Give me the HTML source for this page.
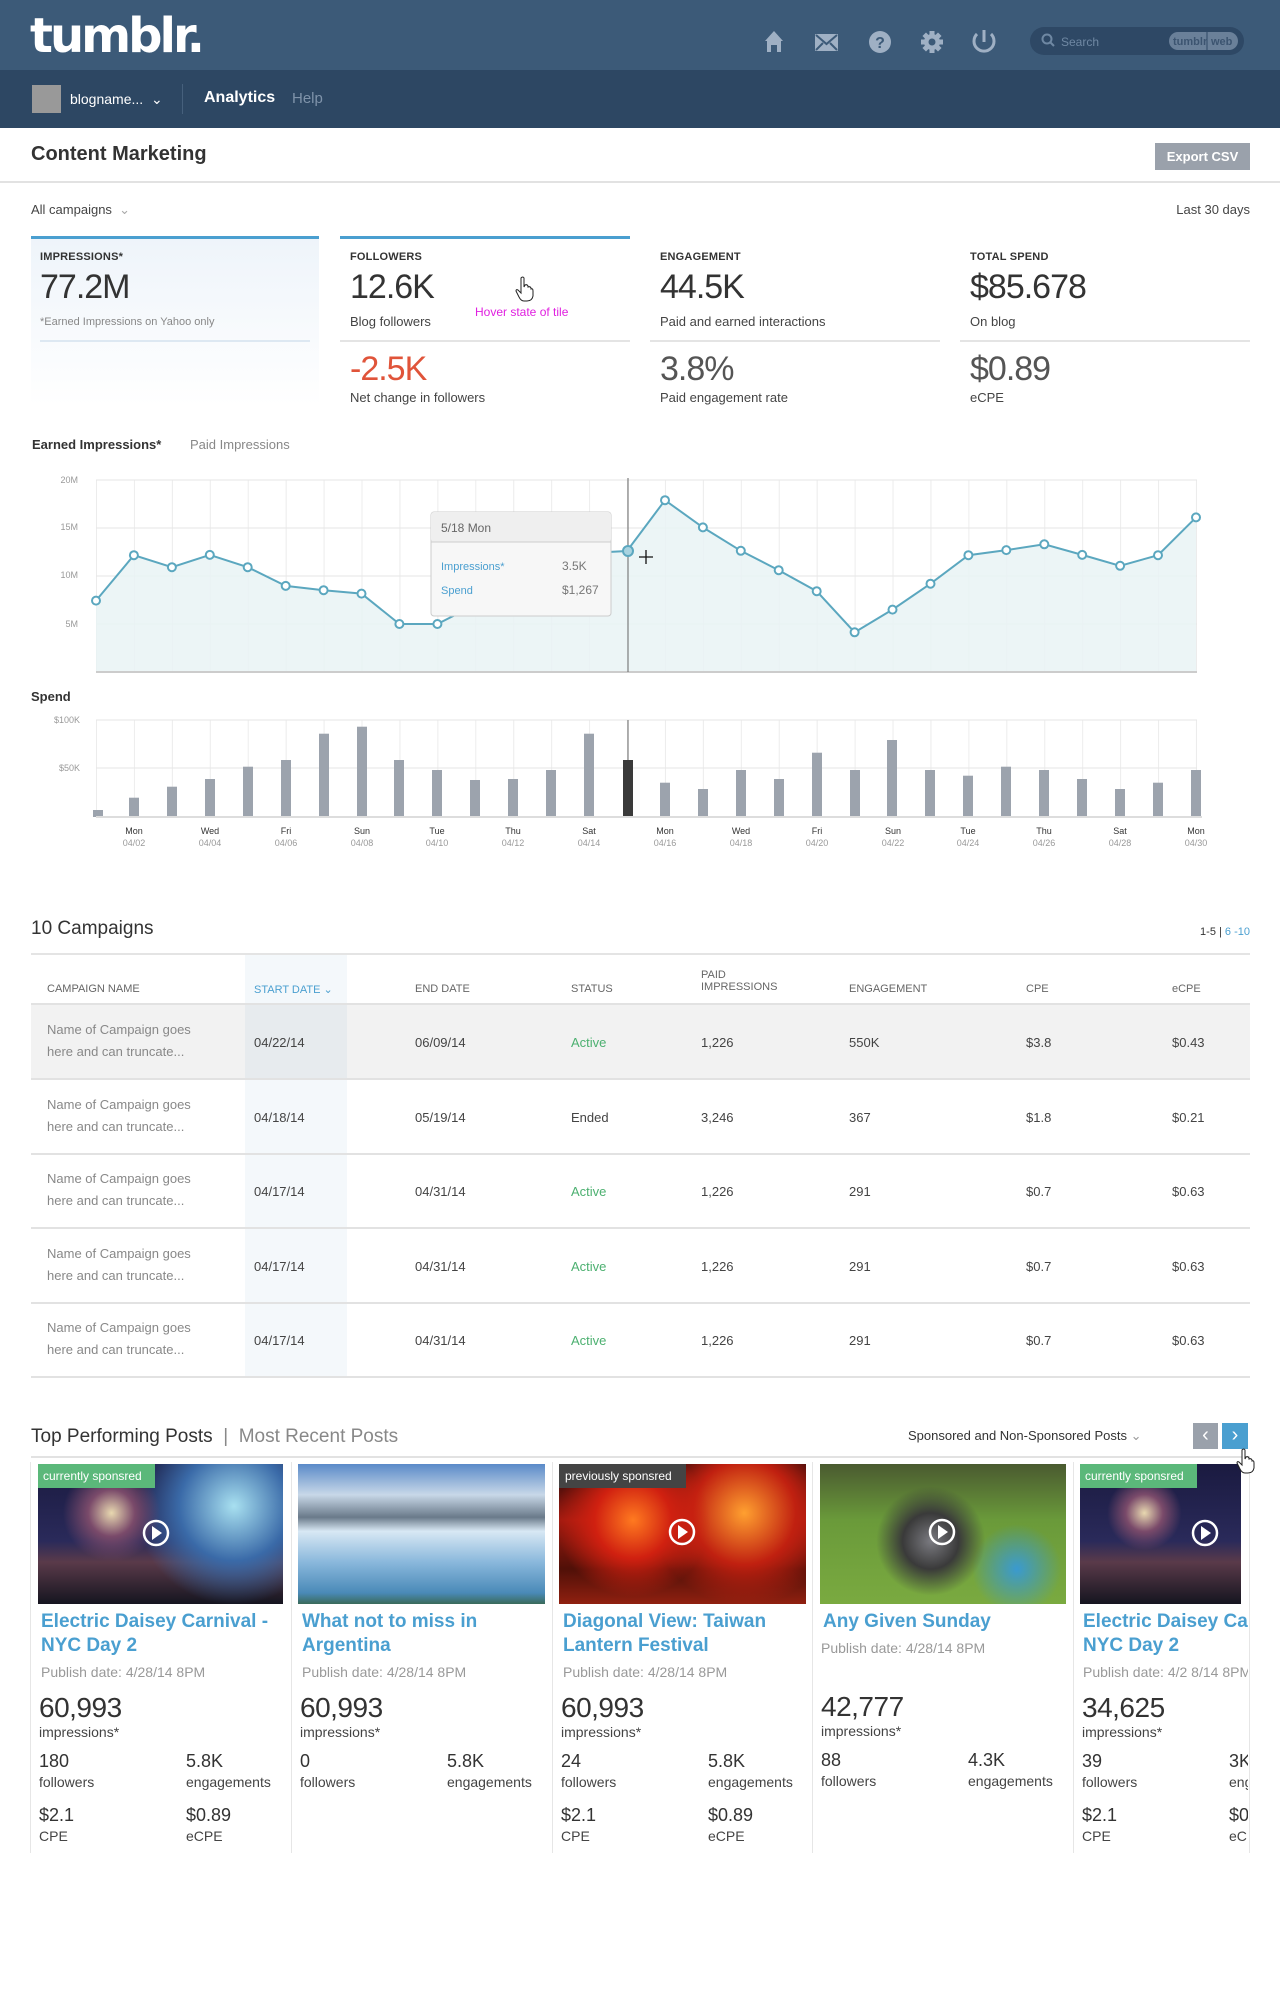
<!DOCTYPE html>
<html><head><meta charset="utf-8">
<style>
*{margin:0;padding:0;box-sizing:border-box}
body{width:1280px;height:2000px;position:relative;background:#fff;font-family:"Liberation Sans",Arial,sans-serif;color:#444;overflow:hidden}
.a{position:absolute;white-space:nowrap}
.lbl{font-size:11px;font-weight:bold;color:#333;letter-spacing:.2px}
.big{font-size:34px;color:#333;letter-spacing:-1px}
.sub{font-size:13px;color:#444}
.th{font-size:11px;color:#666}
.td{font-size:13px;color:#444}
.nm{font-size:13px;color:#888;line-height:22px;white-space:normal;width:170px}
.ttl{font-size:19px;font-weight:bold;color:#4a9fd0;line-height:24px;white-space:normal}
.pd{font-size:14px;color:#999}
.n28{font-size:28px;color:#333;letter-spacing:-.5px}
.n18{font-size:18px;color:#333}
.s14{font-size:14px;color:#444}
</style></head><body>

<!-- header -->
<div class="a" style="left:0;top:0;width:1280px;height:70px;background:#3c5a78"></div>
<div class="a" style="left:0;top:70px;width:1280px;height:58px;background:#2d4763"></div>
<div class="a" style="left:30px;top:8px;font-family:'DejaVu Sans','Liberation Sans',sans-serif;font-weight:bold;font-size:48px;color:#fff;letter-spacing:-3px">tumblr.</div>
<svg class="a" style="left:755px;top:22px" width="520" height="40" viewBox="0 0 520 40">
 <g fill="#9fb0c4">
  <path d="M10 19 L19 9 L28 19 L26 19 L26 30 L22 30 L22 23 L16 23 L16 30 L12 30 L12 19Z"/>
  <rect x="60" y="12" width="23" height="17" rx="1"/>
  <circle cx="125" cy="20" r="11"/>
  <circle cx="177" cy="20" r="8"/>
  <g transform="translate(177 20)"><rect x="-2.5" y="-11" width="5" height="22"/><rect x="-11" y="-2.5" width="22" height="5"/><rect x="-2.5" y="-11" width="5" height="22" transform="rotate(45)"/><rect x="-2.5" y="-11" width="5" height="22" transform="rotate(-45)"/></g>
 </g>
 <path d="M61 13 L71.5 22 L82 13 M61 28 L68 21 M82 28 L75 21" stroke="#3c5a78" stroke-width="2" fill="none"/>
 <text x="125" y="26" font-size="16" font-weight="bold" fill="#3c5a78" text-anchor="middle" font-family="Liberation Sans">?</text>
 <circle cx="177" cy="20" r="3.5" fill="#3c5a78"/>
 <path d="M222 12 A10 10 0 1 0 236 12" stroke="#9fb0c4" stroke-width="3" fill="none"/>
 <line x1="229" y1="8" x2="229" y2="20" stroke="#9fb0c4" stroke-width="3"/>
 <rect x="275" y="5" width="214" height="28" rx="14" fill="#2e4865"/>
 <circle cx="292" cy="17" r="4.5" stroke="#6f88a3" stroke-width="2" fill="none"/><line x1="295" y1="20" x2="299" y2="24" stroke="#6f88a3" stroke-width="2"/>
 <text x="306" y="24" font-size="12" fill="#6f88a3" font-family="Liberation Sans">Search</text>
 <rect x="414" y="10" width="69" height="18" rx="9" fill="#6a8099"/>
 <line x1="452" y1="10" x2="452" y2="28" stroke="#2e4865"/>
 <text x="418" y="23" font-size="11" font-weight="bold" fill="#3c5470" font-family="Liberation Sans">tumblr</text>
 <text x="456" y="23" font-size="11" font-weight="bold" fill="#3c5470" font-family="Liberation Sans">web</text>
</svg>
<div class="a" style="left:32px;top:85px;width:29px;height:28px;background:#999"></div>
<div class="a" style="left:70px;top:91px;font-size:14px;color:#fff">blogname... &nbsp;⌄</div>
<div class="a" style="left:182px;top:84px;width:1px;height:30px;background:#46607c"></div>
<div class="a" style="left:204px;top:89px;font-size:16px;color:#fff;font-weight:bold">Analytics</div>
<div class="a" style="left:292px;top:90px;font-size:15px;color:#7f93aa">Help</div>

<!-- title -->
<div class="a" style="left:31px;top:143px;font-size:20px;font-weight:bold;color:#333">Content Marketing</div>
<div class="a" style="left:1155px;top:143px;width:95px;height:27px;background:#9aa1ab;color:#fff;font-size:13px;font-weight:bold;text-align:center;line-height:27px">Export CSV</div>
<div class="a" style="left:0;top:181px;width:1280px;height:2px;background:#e2e2e2"></div>
<div class="a" style="left:31px;top:202px;font-size:13px;color:#444">All campaigns &nbsp;<span style="color:#aaa">⌄</span></div>
<div class="a" style="left:1150px;top:202px;width:100px;text-align:right;font-size:13px;color:#444">Last 30 days</div>

<!-- tiles -->
<div class="a" style="left:31px;top:236px;width:288px;height:170px;background:linear-gradient(#eef4fa,#fff)"></div>
<div class="a" style="left:31px;top:236px;width:288px;height:3px;background:#4a9fd0"></div>
<div class="a" style="left:340px;top:236px;width:290px;height:3px;background:#4a9fd0"></div>
<div class="a lbl" style="left:40px;top:251px">IMPRESSIONS*</div>
<div class="a big" style="left:40px;top:268px">77.2M</div>
<div class="a" style="left:40px;top:316px;font-size:11px;color:#888">*Earned Impressions on Yahoo only</div>
<div class="a" style="left:40px;top:340px;width:270px;height:2px;background:#dde8f2"></div>

<div class="a lbl" style="left:350px;top:251px">FOLLOWERS</div>
<div class="a big" style="left:350px;top:268px">12.6K</div>
<div class="a sub" style="left:350px;top:314px">Blog followers</div>
<div class="a" style="left:475px;top:305px;font-size:12px;color:#e020e0">Hover state of tile</div>
<svg class="a" style="left:515px;top:276px" width="20" height="26" viewBox="0 0 20 26"><path d="M6 2 Q8 0 9 2 L9 11 L10 9 Q12 8 13 10 L13 11 Q15 10 16 12 L16 13 Q18 12 18 15 L18 20 Q17 25 12 25 L9 25 Q6 25 4 21 L1 15 Q1 13 3 14 L6 17 Z" fill="#fff" stroke="#222" stroke-width="1"/></svg>
<div class="a" style="left:340px;top:340px;width:290px;height:2px;background:#e4e4e4"></div>
<div class="a big" style="left:350px;top:350px;color:#e0543a">-2.5K</div>
<div class="a sub" style="left:350px;top:390px">Net change in followers</div>

<div class="a lbl" style="left:660px;top:251px">ENGAGEMENT</div>
<div class="a big" style="left:660px;top:268px">44.5K</div>
<div class="a sub" style="left:660px;top:314px">Paid and earned interactions</div>
<div class="a" style="left:650px;top:340px;width:290px;height:2px;background:#e4e4e4"></div>
<div class="a big" style="left:660px;top:350px;color:#555">3.8%</div>
<div class="a sub" style="left:660px;top:390px">Paid engagement rate</div>

<div class="a lbl" style="left:970px;top:251px">TOTAL SPEND</div>
<div class="a big" style="left:970px;top:268px">$85.678</div>
<div class="a sub" style="left:970px;top:314px">On blog</div>
<div class="a" style="left:960px;top:340px;width:290px;height:2px;background:#e4e4e4"></div>
<div class="a big" style="left:970px;top:350px;color:#555">$0.89</div>
<div class="a sub" style="left:970px;top:390px">eCPE</div>

<!-- charts -->
<div class="a" style="left:32px;top:437px;font-size:13px;font-weight:bold;color:#333">Earned Impressions*</div>
<div class="a" style="left:190px;top:437px;font-size:13px;color:#888">Paid Impressions</div>
<div class="a" style="left:31px;top:689px;font-size:13px;font-weight:bold;color:#333">Spend</div>
<svg class="a" style="left:0;top:0" width="1280" height="880" font-family="Liberation Sans">
 <defs>
  <pattern id="vg" x="96" y="0" width="37.93" height="880" patternUnits="userSpaceOnUse"><line x1="0.5" y1="0" x2="0.5" y2="880" stroke="#ececec"/></pattern>
 </defs>
 <rect x="96" y="480" width="1101" height="192" fill="url(#vg)"/>
 <g stroke="#e6e6e6"><line x1="96" y1="480" x2="1197" y2="480"/><line x1="96" y1="528" x2="1197" y2="528"/><line x1="96" y1="576" x2="1197" y2="576"/><line x1="96" y1="624" x2="1197" y2="624"/></g>
 <g font-size="9" fill="#999" text-anchor="end"><text x="78" y="483">20M</text><text x="78" y="530">15M</text><text x="78" y="578">10M</text><text x="78" y="627">5M</text></g>
 <polygon fill="#e9f3f5" fill-opacity=".85" points="96,672 96,600.6 133.9,555.2 171.9,567.2 209.8,554.9 247.7,567.2 285.7,585.9 323.6,590.2 361.5,593.6 399.4,624 437.4,624 475.3,604.8 513.2,580.8 551.2,561.6 589.1,553 627,551 665,500.2 702.9,527.4 740.8,550.8 778.7,570.2 816.7,591.2 854.6,632.3 892.5,609.6 930.5,583.7 968.4,555.2 1006.3,550.1 1044.3,544.3 1082.2,554.9 1120.1,565.8 1158,555.2 1196,517.4 1196,672"/>
 <line x1="96" y1="672" x2="1197" y2="672" stroke="#ccc" stroke-width="2"/>
 <line x1="628" y1="478" x2="628" y2="672" stroke="#666"/>
 <polyline fill="none" stroke="#5ba7bf" stroke-width="2" points="96,600.6 133.9,555.2 171.9,567.2 209.8,554.9 247.7,567.2 285.7,585.9 323.6,590.2 361.5,593.6 399.4,624 437.4,624 475.3,604.8 513.2,580.8 551.2,561.6 589.1,553 627,551 665,500.2 702.9,527.4 740.8,550.8 778.7,570.2 816.7,591.2 854.6,632.3 892.5,609.6 930.5,583.7 968.4,555.2 1006.3,550.1 1044.3,544.3 1082.2,554.9 1120.1,565.8 1158,555.2 1196,517.4"/>
 <g fill="#fff" stroke="#5ba7bf" stroke-width="2">
  <circle cx="96" cy="600.6" r="4"/><circle cx="133.9" cy="555.2" r="4"/><circle cx="171.9" cy="567.2" r="4"/><circle cx="209.8" cy="554.9" r="4"/><circle cx="247.7" cy="567.2" r="4"/><circle cx="285.7" cy="585.9" r="4"/><circle cx="323.6" cy="590.2" r="4"/><circle cx="361.5" cy="593.6" r="4"/><circle cx="399.4" cy="624" r="4"/><circle cx="437.4" cy="624" r="4"/><circle cx="665" cy="500.2" r="4"/><circle cx="702.9" cy="527.4" r="4"/><circle cx="740.8" cy="550.8" r="4"/><circle cx="778.7" cy="570.2" r="4"/><circle cx="816.7" cy="591.2" r="4"/><circle cx="854.6" cy="632.3" r="4"/><circle cx="892.5" cy="609.6" r="4"/><circle cx="930.5" cy="583.7" r="4"/><circle cx="968.4" cy="555.2" r="4"/><circle cx="1006.3" cy="550.1" r="4"/><circle cx="1044.3" cy="544.3" r="4"/><circle cx="1082.2" cy="554.9" r="4"/><circle cx="1120.1" cy="565.8" r="4"/><circle cx="1158" cy="555.2" r="4"/><circle cx="1196" cy="517.4" r="4"/>
  <circle cx="628" cy="551" r="5" fill="#a8d3e0"/>
 </g>
 <path d="M646 550v14M639 557h14" stroke="#111" stroke-width="1.3"/>
 <rect x="431" y="512" width="180" height="104" rx="3" fill="#f7f7f7" stroke="#ccc"/>
 <rect x="431" y="512" width="180" height="30" rx="3" fill="#efefef"/>
 <line x1="431" y1="542" x2="611" y2="542" stroke="#ccc"/>
 <text x="441" y="532" font-size="12" fill="#666">5/18 Mon</text>
 <text x="441" y="570" font-size="11" fill="#4a9fd0">Impressions*</text><text x="562" y="570" font-size="12" fill="#777">3.5K</text>
 <text x="441" y="594" font-size="11" fill="#4a9fd0">Spend</text><text x="562" y="594" font-size="12" fill="#777">$1,267</text>
 <rect x="96" y="720" width="1101" height="97" fill="url(#vg)"/>
 <g stroke="#e6e6e6"><line x1="96" y1="720" x2="1197" y2="720"/><line x1="96" y1="768" x2="1197" y2="768"/></g>
 <g font-size="9" fill="#999" text-anchor="end"><text x="80" y="723">$100K</text><text x="80" y="771">$50K</text></g>
 <line x1="628" y1="720" x2="628" y2="817" stroke="#666"/>
 <g fill="#9ca3ad">
  <rect x="93" y="810" width="10" height="7"/><rect x="129" y="797.7" width="10" height="19.3"/><rect x="167" y="786.7" width="10" height="30.3"/><rect x="205" y="779" width="10" height="38"/><rect x="243" y="766.7" width="10" height="50.3"/><rect x="281" y="760" width="10" height="57"/><rect x="319" y="733.7" width="10" height="83.3"/><rect x="357" y="726.7" width="10" height="90.3"/><rect x="394" y="760" width="10" height="57"/><rect x="432" y="770" width="10" height="47"/><rect x="470" y="780" width="10" height="37"/><rect x="508" y="779" width="10" height="38"/><rect x="546" y="770" width="10" height="47"/><rect x="584" y="733.7" width="10" height="83.3"/><rect x="660" y="782.7" width="10" height="34.3"/><rect x="698" y="789" width="10" height="28"/><rect x="736" y="770" width="10" height="47"/><rect x="774" y="779" width="10" height="38"/><rect x="812" y="752.7" width="10" height="64.3"/><rect x="850" y="770" width="10" height="47"/><rect x="887" y="740" width="10" height="77"/><rect x="925" y="770" width="10" height="47"/><rect x="963" y="775.7" width="10" height="41.3"/><rect x="1001" y="766.7" width="10" height="50.3"/><rect x="1039" y="770" width="10" height="47"/><rect x="1077" y="779" width="10" height="38"/><rect x="1115" y="789" width="10" height="28"/><rect x="1153" y="782.7" width="10" height="34.3"/><rect x="1191" y="770" width="10" height="47"/>
 </g>
 <rect x="623" y="760" width="10" height="57" fill="#3a3a3a"/>
 <line x1="96" y1="817" x2="1202" y2="817" stroke="#ddd" stroke-width="2"/>
 <g font-size="9" text-anchor="middle" fill="#333">
  <text x="134" y="834">Mon</text><text x="210" y="834">Wed</text><text x="286" y="834">Fri</text><text x="362" y="834">Sun</text><text x="437" y="834">Tue</text><text x="513" y="834">Thu</text><text x="589" y="834">Sat</text><text x="665" y="834">Mon</text><text x="741" y="834">Wed</text><text x="817" y="834">Fri</text><text x="893" y="834">Sun</text><text x="968" y="834">Tue</text><text x="1044" y="834">Thu</text><text x="1120" y="834">Sat</text><text x="1196" y="834">Mon</text>
 </g>
 <g font-size="9" text-anchor="middle" fill="#999">
  <text x="134" y="846">04/02</text><text x="210" y="846">04/04</text><text x="286" y="846">04/06</text><text x="362" y="846">04/08</text><text x="437" y="846">04/10</text><text x="513" y="846">04/12</text><text x="589" y="846">04/14</text><text x="665" y="846">04/16</text><text x="741" y="846">04/18</text><text x="817" y="846">04/20</text><text x="893" y="846">04/22</text><text x="968" y="846">04/24</text><text x="1044" y="846">04/26</text><text x="1120" y="846">04/28</text><text x="1196" y="846">04/30</text>
 </g>
</svg>

<!-- table -->
<div class="a" style="left:31px;top:918px;font-size:19px;color:#333">10 Campaigns</div>
<div class="a" style="left:1150px;top:926px;width:100px;text-align:right;font-size:11px;color:#333">1-5 | <span style="color:#4a9fd0">6 -10</span></div>
<div class="a" style="left:31px;top:953px;width:1219px;height:2px;background:#e4e4e4"></div>
<div class="a" style="left:245px;top:955px;width:102px;height:422px;background:#f4f8fb"></div>
<div class="a" style="left:31px;top:1004px;width:1219px;height:74px;background:rgba(0,0,0,.05)"></div>
<div class="a th" style="left:47px;top:983px">CAMPAIGN NAME</div>
<div class="a th" style="left:254px;top:983px;color:#4a9fd0">START DATE ⌄</div>
<div class="a th" style="left:415px;top:983px">END DATE</div>
<div class="a th" style="left:571px;top:983px">STATUS</div>
<div class="a th" style="left:701px;top:969px">PAID<br>IMPRESSIONS</div>
<div class="a th" style="left:849px;top:983px">ENGAGEMENT</div>
<div class="a th" style="left:1026px;top:983px">CPE</div>
<div class="a th" style="left:1172px;top:983px">eCPE</div>
<div class="a" style="left:31px;top:1003px;width:1219px;height:2px;background:#e2e2e2"></div>

<div class="a" style="left:0;top:1005px;width:1280px">
 <div style="position:relative;height:74.5px"><div class="a nm" style="left:47px;top:14px">Name of Campaign goes here and can truncate...</div><div class="a td" style="left:254px;top:30px">04/22/14</div><div class="a td" style="left:415px;top:30px">06/09/14</div><div class="a td" style="left:571px;top:30px;color:#4cb070">Active</div><div class="a td" style="left:701px;top:30px">1,226</div><div class="a td" style="left:849px;top:30px">550K</div><div class="a td" style="left:1026px;top:30px">$3.8</div><div class="a td" style="left:1172px;top:30px">$0.43</div><div class="a" style="left:31px;top:73px;width:1219px;height:2px;background:#e2e2e2"></div></div>
 <div style="position:relative;height:74.5px"><div class="a nm" style="left:47px;top:14px">Name of Campaign goes here and can truncate...</div><div class="a td" style="left:254px;top:30px">04/18/14</div><div class="a td" style="left:415px;top:30px">05/19/14</div><div class="a td" style="left:571px;top:30px">Ended</div><div class="a td" style="left:701px;top:30px">3,246</div><div class="a td" style="left:849px;top:30px">367</div><div class="a td" style="left:1026px;top:30px">$1.8</div><div class="a td" style="left:1172px;top:30px">$0.21</div><div class="a" style="left:31px;top:73px;width:1219px;height:2px;background:#e2e2e2"></div></div>
 <div style="position:relative;height:74.5px"><div class="a nm" style="left:47px;top:14px">Name of Campaign goes here and can truncate...</div><div class="a td" style="left:254px;top:30px">04/17/14</div><div class="a td" style="left:415px;top:30px">04/31/14</div><div class="a td" style="left:571px;top:30px;color:#4cb070">Active</div><div class="a td" style="left:701px;top:30px">1,226</div><div class="a td" style="left:849px;top:30px">291</div><div class="a td" style="left:1026px;top:30px">$0.7</div><div class="a td" style="left:1172px;top:30px">$0.63</div><div class="a" style="left:31px;top:73px;width:1219px;height:2px;background:#e2e2e2"></div></div>
 <div style="position:relative;height:74.5px"><div class="a nm" style="left:47px;top:14px">Name of Campaign goes here and can truncate...</div><div class="a td" style="left:254px;top:30px">04/17/14</div><div class="a td" style="left:415px;top:30px">04/31/14</div><div class="a td" style="left:571px;top:30px;color:#4cb070">Active</div><div class="a td" style="left:701px;top:30px">1,226</div><div class="a td" style="left:849px;top:30px">291</div><div class="a td" style="left:1026px;top:30px">$0.7</div><div class="a td" style="left:1172px;top:30px">$0.63</div><div class="a" style="left:31px;top:73px;width:1219px;height:2px;background:#e2e2e2"></div></div>
 <div style="position:relative;height:74.5px"><div class="a nm" style="left:47px;top:14px">Name of Campaign goes here and can truncate...</div><div class="a td" style="left:254px;top:30px">04/17/14</div><div class="a td" style="left:415px;top:30px">04/31/14</div><div class="a td" style="left:571px;top:30px;color:#4cb070">Active</div><div class="a td" style="left:701px;top:30px">1,226</div><div class="a td" style="left:849px;top:30px">291</div><div class="a td" style="left:1026px;top:30px">$0.7</div><div class="a td" style="left:1172px;top:30px">$0.63</div><div class="a" style="left:31px;top:73px;width:1219px;height:2px;background:#e2e2e2"></div></div>
</div>

<!-- posts -->
<div class="a" style="left:31px;top:1426px;font-size:19px;color:#333">Top Performing Posts <span style="color:#888">&nbsp;|&nbsp; Most Recent Posts</span></div>
<div class="a" style="left:908px;top:1428px;font-size:13px;color:#333">Sponsored and Non-Sponsored Posts <span style="color:#999">⌄</span></div>
<div class="a" style="left:1193px;top:1423px;width:25px;height:26px;background:#9aa1ab;color:#fff;font-size:20px;text-align:center;line-height:24px">‹</div>
<div class="a" style="left:1222px;top:1423px;width:26px;height:26px;background:#4a9fd0;color:#fff;font-size:20px;text-align:center;line-height:24px">›</div>
<div class="a" style="left:31px;top:1456px;width:1219px;height:2px;background:#e2e2e2"></div>
<div class="a" style="left:30px;top:1462px;width:1px;height:391px;background:#e6e6e6"></div>
<div class="a" style="left:291px;top:1462px;width:1px;height:391px;background:#e6e6e6"></div>
<div class="a" style="left:552px;top:1462px;width:1px;height:391px;background:#e6e6e6"></div>
<div class="a" style="left:812px;top:1462px;width:1px;height:391px;background:#e6e6e6"></div>
<div class="a" style="left:1073px;top:1462px;width:1px;height:391px;background:#e6e6e6"></div>
<div class="a" style="left:1249px;top:1462px;width:1px;height:391px;background:#e6e6e6"></div>

<!-- images -->
<div class="a" style="left:38px;top:1464px;width:245px;height:140px;background:radial-gradient(circle at 30% 35%,#e8d8b0 0,#7a4a6a 12%,transparent 25%),radial-gradient(circle at 80% 30%,#a8e0f0 0,#3a6aa8 25%,transparent 45%),linear-gradient(#1a1a40,#2a2a5a 55%,#5a3a4a 70%,#151520)"></div>
<div class="a" style="left:298px;top:1464px;width:247px;height:140px;background:linear-gradient(#5a8ac8 0,#c8d8e8 22%,#6a7a8a 38%,#d8e8f4 48%,#8ab8dc 70%,#4a8ab8 92%,#3a6a5a)"></div>
<div class="a" style="left:559px;top:1464px;width:247px;height:140px;background:radial-gradient(circle at 30% 40%,#ff7a20 0,#d02010 20%,transparent 40%),radial-gradient(circle at 75% 35%,#ffa030 0,#c02010 25%,transparent 45%),linear-gradient(#200808,#a01a10 40%,#501008 75%,#902010)"></div>
<div class="a" style="left:820px;top:1464px;width:246px;height:140px;background:radial-gradient(circle at 45% 55%,#7a7a80 0,#3a3a3a 18%,transparent 35%),radial-gradient(circle at 80% 75%,#3a9ad0 0,transparent 20%),linear-gradient(#4a5a30,#6a9a3a 40%,#7aaa40)"></div>
<div class="a" style="left:1080px;top:1464px;width:161px;height:140px;background:radial-gradient(circle at 40% 35%,#e8d8b0 0,#7a4a6a 14%,transparent 28%),linear-gradient(#1a1a40,#2a2a5a 55%,#5a3a4a 70%,#151520)"></div>
<div class="a" style="left:38px;top:1464px;width:117px;height:24px;background:#5bb87a;color:#fff;font-size:12px;line-height:24px;padding-left:5px">currently sponsred</div>
<div class="a" style="left:559px;top:1464px;width:127px;height:24px;background:#444;color:#fff;font-size:12px;line-height:24px;padding-left:6px">previously sponsred</div>
<div class="a" style="left:1080px;top:1464px;width:117px;height:24px;background:#5bb87a;color:#fff;font-size:12px;line-height:24px;padding-left:5px">currently sponsred</div>
<svg class="a" style="left:0;top:1460px" width="1280" height="150">
 <g fill="none" stroke="#fff" stroke-width="2.5"><circle cx="156" cy="73" r="12"/><circle cx="682" cy="72" r="12"/><circle cx="942" cy="72" r="12"/><circle cx="1205" cy="73" r="12"/></g>
 <g fill="#fff"><path d="M152 66l10 7-10 7z"/><path d="M678 65l10 7-10 7z"/><path d="M938 65l10 7-10 7z"/><path d="M1201 66l10 7-10 7z"/></g>
</svg>

<!-- card text -->
<div class="a ttl" style="left:41px;top:1610px;width:245px">Electric Daisey Carnival - NYC Day 2</div>
<div class="a pd" style="left:41px;top:1664px">Publish date: 4/28/14 8PM</div>
<div class="a n28" style="left:39px;top:1692px">60,993</div>
<div class="a s14" style="left:39px;top:1724px">impressions*</div>
<div class="a n18" style="left:39px;top:1751px">180</div><div class="a s14" style="left:39px;top:1774px">followers</div>
<div class="a n18" style="left:186px;top:1751px">5.8K</div><div class="a s14" style="left:186px;top:1774px">engagements</div>
<div class="a n18" style="left:39px;top:1805px">$2.1</div><div class="a s14" style="left:39px;top:1828px">CPE</div>
<div class="a n18" style="left:186px;top:1805px">$0.89</div><div class="a s14" style="left:186px;top:1828px">eCPE</div>

<div class="a ttl" style="left:302px;top:1610px;width:245px">What not to miss in Argentina</div>
<div class="a pd" style="left:302px;top:1664px">Publish date: 4/28/14 8PM</div>
<div class="a n28" style="left:300px;top:1692px">60,993</div>
<div class="a s14" style="left:300px;top:1724px">impressions*</div>
<div class="a n18" style="left:300px;top:1751px">0</div><div class="a s14" style="left:300px;top:1774px">followers</div>
<div class="a n18" style="left:447px;top:1751px">5.8K</div><div class="a s14" style="left:447px;top:1774px">engagements</div>

<div class="a ttl" style="left:563px;top:1610px;width:245px">Diagonal View: Taiwan Lantern Festival</div>
<div class="a pd" style="left:563px;top:1664px">Publish date: 4/28/14 8PM</div>
<div class="a n28" style="left:561px;top:1692px">60,993</div>
<div class="a s14" style="left:561px;top:1724px">impressions*</div>
<div class="a n18" style="left:561px;top:1751px">24</div><div class="a s14" style="left:561px;top:1774px">followers</div>
<div class="a n18" style="left:708px;top:1751px">5.8K</div><div class="a s14" style="left:708px;top:1774px">engagements</div>
<div class="a n18" style="left:561px;top:1805px">$2.1</div><div class="a s14" style="left:561px;top:1828px">CPE</div>
<div class="a n18" style="left:708px;top:1805px">$0.89</div><div class="a s14" style="left:708px;top:1828px">eCPE</div>

<div class="a ttl" style="left:823px;top:1610px;width:245px">Any Given Sunday</div>
<div class="a pd" style="left:821px;top:1640px">Publish date: 4/28/14 8PM</div>
<div class="a n28" style="left:821px;top:1691px">42,777</div>
<div class="a s14" style="left:821px;top:1723px">impressions*</div>
<div class="a n18" style="left:821px;top:1750px">88</div><div class="a s14" style="left:821px;top:1773px">followers</div>
<div class="a n18" style="left:968px;top:1750px">4.3K</div><div class="a s14" style="left:968px;top:1773px">engagements</div>

<div class="a" style="left:1080px;top:1605px;width:168px;height:250px;overflow:hidden">
 <div class="a ttl" style="left:3px;top:5px;width:300px">Electric Daisey Carnival -<br>NYC Day 2</div>
 <div class="a pd" style="left:3px;top:59px">Publish date: 4/2 8/14 8PM</div>
 <div class="a n28" style="left:2px;top:87px">34,625</div>
 <div class="a s14" style="left:2px;top:119px">impressions*</div>
 <div class="a n18" style="left:2px;top:146px">39</div><div class="a s14" style="left:2px;top:169px">followers</div>
 <div class="a n18" style="left:149px;top:146px">3K</div><div class="a s14" style="left:149px;top:169px">engagements</div>
 <div class="a n18" style="left:2px;top:200px">$2.1</div><div class="a s14" style="left:2px;top:223px">CPE</div>
 <div class="a n18" style="left:149px;top:200px">$0.89</div><div class="a s14" style="left:149px;top:223px">eCPE</div>
</div>
<svg class="a" style="left:1236px;top:1448px" width="20" height="26" viewBox="0 0 20 26"><path d="M6 2 Q8 0 9 2 L9 11 L10 9 Q12 8 13 10 L13 11 Q15 10 16 12 L16 13 Q18 12 18 15 L18 20 Q17 25 12 25 L9 25 Q6 25 4 21 L1 15 Q1 13 3 14 L6 17 Z" fill="#fff" stroke="#222" stroke-width="1"/></svg>
</body></html>
